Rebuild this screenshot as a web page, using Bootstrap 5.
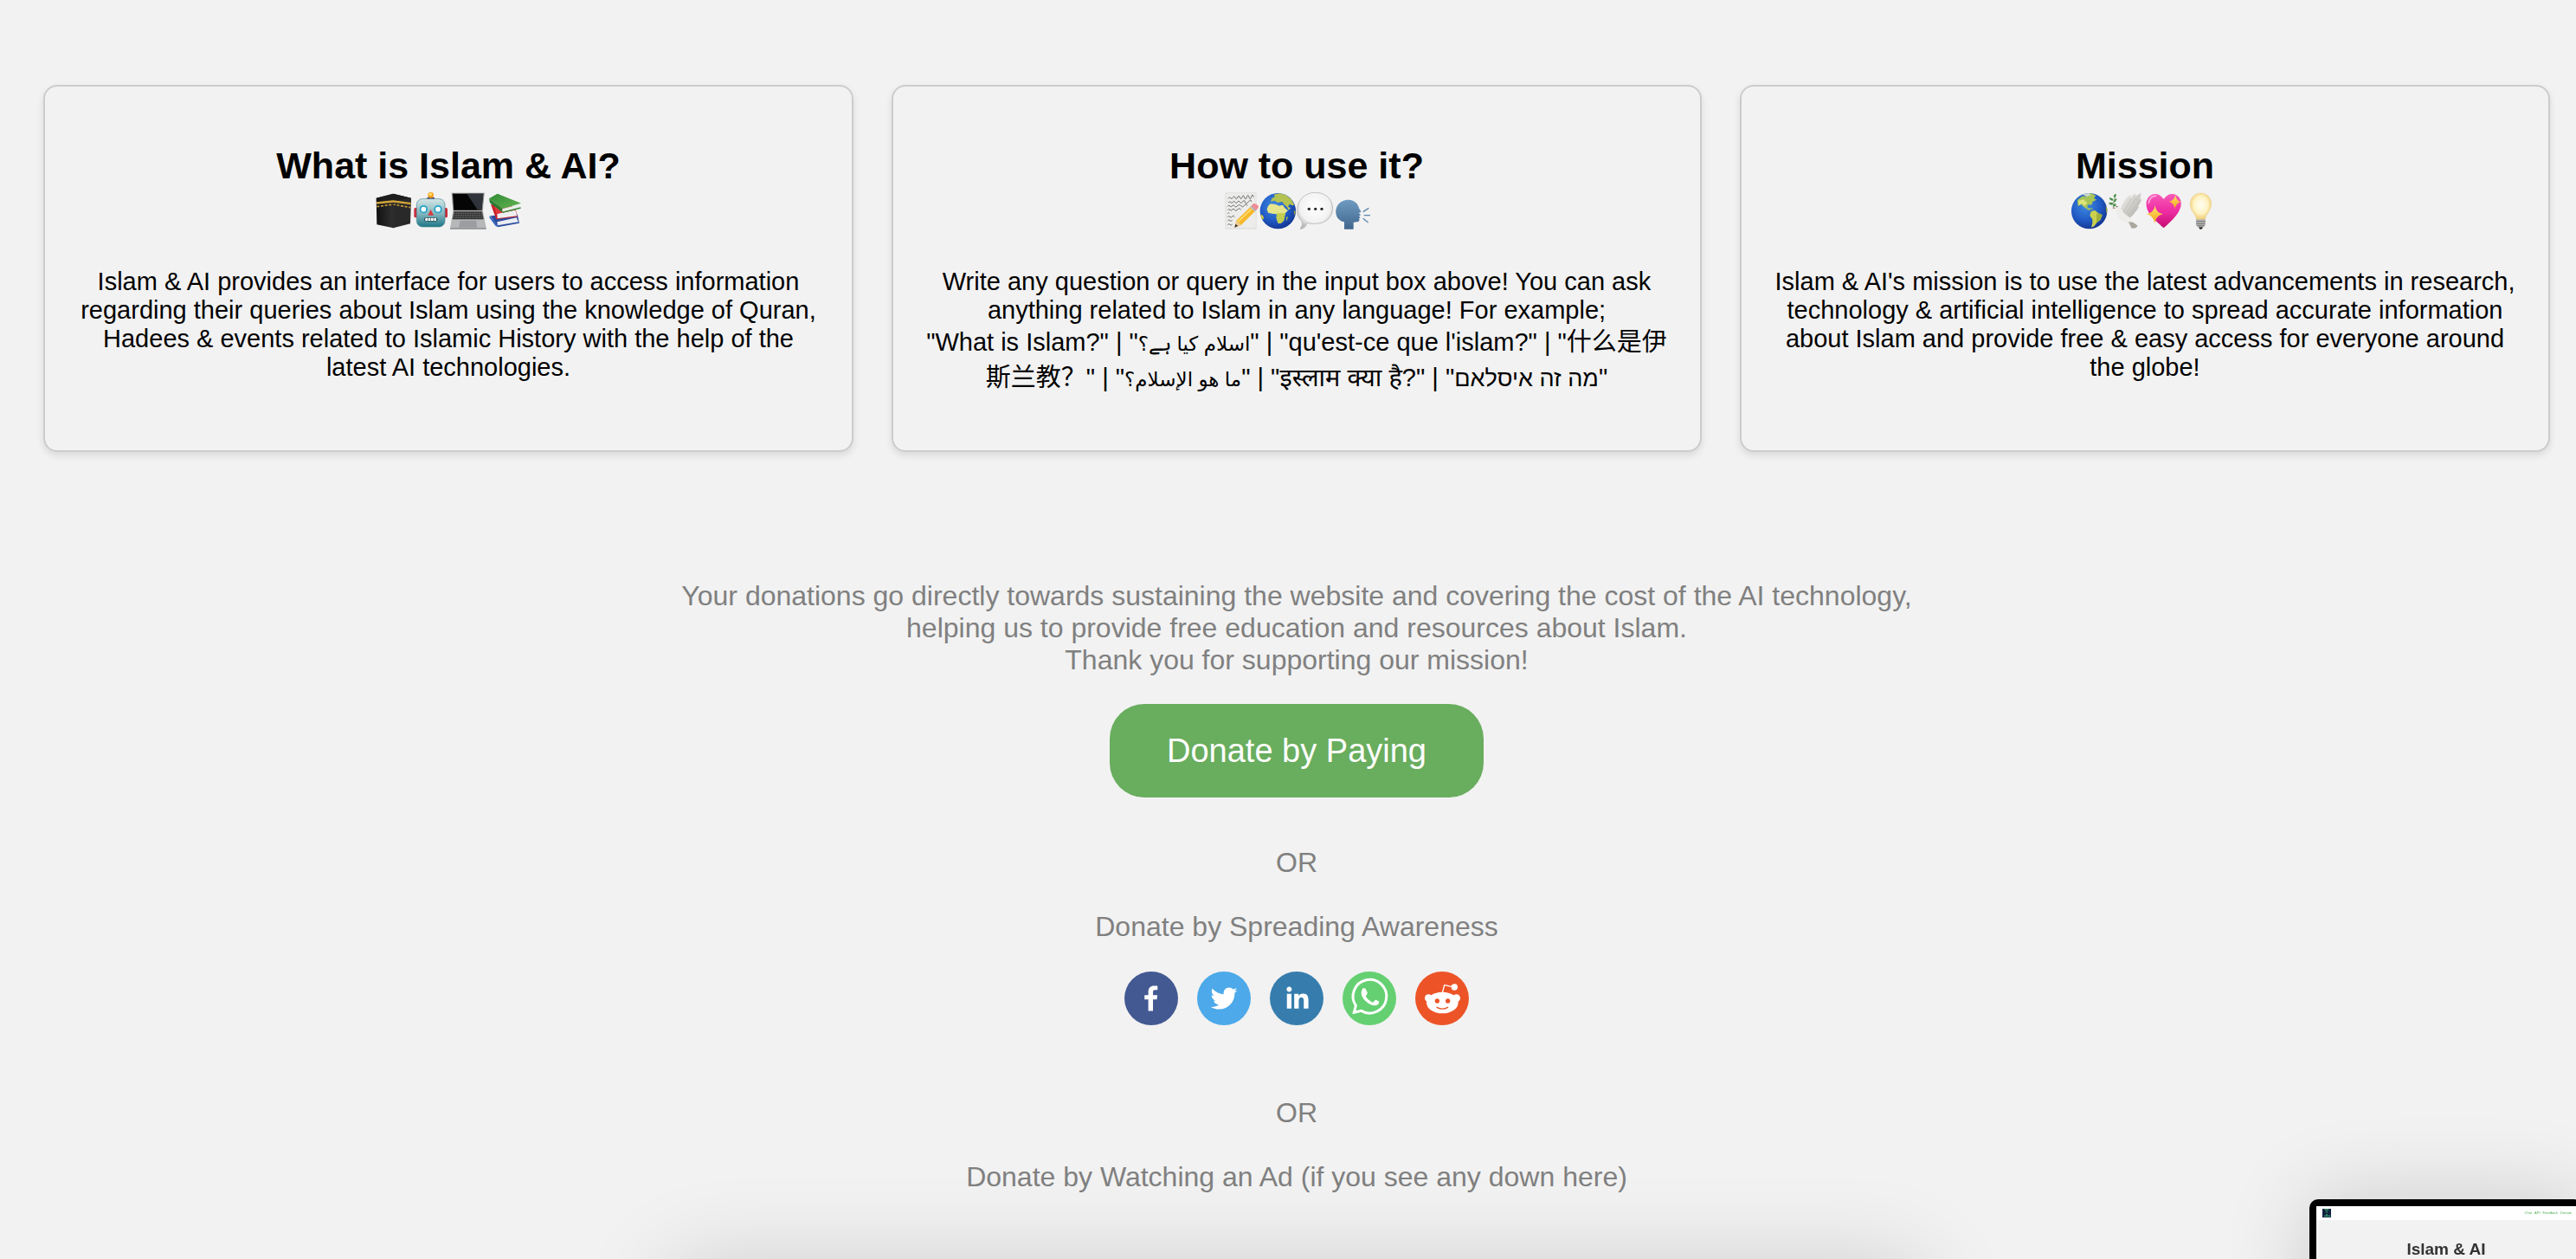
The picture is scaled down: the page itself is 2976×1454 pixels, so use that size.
<!DOCTYPE html>
<html lang="en">
<head>
<meta charset="utf-8">
<meta name="viewport" content="width=device-width, initial-scale=1">
<title>Islam &amp; AI</title>
<link href="https://cdn.jsdelivr.net/npm/bootstrap@5.3.0/dist/css/bootstrap.min.css" rel="stylesheet">
<style>
  body { background: #f2f2f2; color: #000; font-family: "Liberation Sans", Arial, "Noto Sans CJK SC", "DejaVu Sans", "Noto Sans", sans-serif; }
  .page-shell { height: 100vh; padding: 98px 30px 0 50px; }
  .info-grid { display: grid; grid-template-columns: repeat(3, 1fr); gap: 44px; }
  .info-card { background: transparent; border: 2px solid #ccc; border-radius: 16px; box-shadow: 0 4px 8px rgba(0,0,0,.1); padding: 66px 36px 63px; color: #000; }
  .info-card h2 { font-size: 43px; line-height: 50px; font-weight: 700; margin: 0 0 6px; }
  .emoji-strip { width: 172px; height: 43px; margin: 0 auto 44px; display: block; }
  .info-card p { font-size: 29px; line-height: 33px; margin: 0; }
  .info-card .samples { line-height: 41px; display: block; white-space: nowrap; }
  .samples bdi { font-size: 23px; line-height: 1; }
  .samples bdi:lang(he) { font-size: 27px; }
  .donate-area { margin-top: 148px; font-size: 32px; line-height: 37px; color: #808080; }
  .pay-btn { margin-top: 32px; width: 432px; height: 108px; border-radius: 40px; background: #69ad5e; color: #fff; font-size: 38px; border: 0; }
  .pay-btn:hover { background: #5b9c50; color: #fff; }
  .gap-after-btn { margin-top: 57px; }
  .gap-line { margin-top: 37px; }
  .social-row { margin-top: 33px; gap: 22px; }
  .social-row svg { width: 62px; height: 62px; display: block; }
  .gap-after-social { margin-top: 83px; }
  .ad-slot { width: 1444px; max-width: 100%; height: 400px; margin-top: 84px; background: #f2f2f2; box-shadow: 0 0 100px rgba(0,0,0,.16); }
  .preview-box { right: -8px; bottom: -131px; width: 316px; height: 200px; border: 8px solid #000; border-radius: 10px; background: #f2f2f2; box-shadow: 0 0 100px rgba(0,0,0,.16); }
  .preview-bar { height: 16px; background: #fff; padding: 0 5px 0 7px; }
  .preview-bar nav { gap: 3px; }
  .preview-bar a { font-size: 4px; line-height: 8px; color: #4caf50; text-decoration: none; }
  .preview-title { font-size: 19px; line-height: 22px; font-weight: 700; color: #333; margin-top: 23px; }
</style>
</head>
<body>
<svg width="0" height="0" class="position-absolute" aria-hidden="true">
  <defs>
    <radialGradient id="sea" cx=".4" cy=".35" r=".7"><stop offset="0" stop-color="#3f8be0"/><stop offset=".6" stop-color="#2059c4"/><stop offset="1" stop-color="#12338c"/></radialGradient>
    <linearGradient id="bot" x1="0" y1="0" x2="0" y2="1"><stop offset="0" stop-color="#d4e6e6"/><stop offset=".55" stop-color="#7fb4bd"/><stop offset="1" stop-color="#1d7686"/></linearGradient>
    <linearGradient id="blk" x1="0" y1="0" x2="1" y2="0"><stop offset="0" stop-color="#111"/><stop offset="1" stop-color="#303030"/></linearGradient>
    <linearGradient id="grn" x1="0" y1="0" x2="1" y2="1"><stop offset="0" stop-color="#2f8a35"/><stop offset="1" stop-color="#66b552"/></linearGradient>
    <radialGradient id="bub" cx=".5" cy=".4" r=".6"><stop offset="0" stop-color="#fff"/><stop offset=".7" stop-color="#f2f2f2"/><stop offset="1" stop-color="#b9b9b9"/></radialGradient>
    <linearGradient id="head" x1="0" y1="0" x2="0" y2="1"><stop offset="0" stop-color="#6f9cc2"/><stop offset="1" stop-color="#41658d"/></linearGradient>
    <linearGradient id="wing" x1="0" y1="0" x2="1" y2="1"><stop offset="0" stop-color="#f4f3f0"/><stop offset="1" stop-color="#aaa7a0"/></linearGradient>
    <linearGradient id="pink" x1="0" y1="0" x2="0" y2="1"><stop offset="0" stop-color="#f85ab8"/><stop offset=".5" stop-color="#ee2da3"/><stop offset="1" stop-color="#c60d72"/></linearGradient>
    <radialGradient id="glow" cx=".5" cy=".45" r=".55"><stop offset="0" stop-color="#fffef4"/><stop offset=".6" stop-color="#fff3c4"/><stop offset="1" stop-color="#f0cc72"/></radialGradient>
    <linearGradient id="gold" x1="0" y1="0" x2="0" y2="1"><stop offset="0" stop-color="#ffe46a"/><stop offset="1" stop-color="#f3a21c"/></linearGradient>
  </defs>
</svg>

<main class="page-shell overflow-hidden d-flex flex-column">
  <section class="info-grid text-center">
    <article class="card info-card">
      <h2>What is Islam &amp; AI?</h2>
      <svg class="emoji-strip" viewBox="36 36 516 129" role="img" aria-label="Kaaba, robot, laptop, books">
        <path d="M44 56 103 41 103 160 46 148Z" fill="url(#blk)"/><path d="M103 41 165 56 162 145 103 160Z" fill="#292929"/>
        <path d="M44 56 103 41 165 56 103 67Z" fill="#1d1d1d"/>
        <path d="M45 70 103 64 164 72V79L103 71 45 77Z" fill="#d3a53a"/>
        <path d="M46 86 103 78 163 89" fill="none" stroke="#c99b3a" stroke-width="5" stroke-dasharray="9 5"/>
        <path d="M103 72V160" stroke="#111" stroke-width="2"/>
        <rect x="175" y="90" width="18" height="34" rx="5" fill="#c72c3a"/><rect x="273" y="90" width="18" height="34" rx="5" fill="#c72c3a"/>
        <path d="M220 64V55Q233 48 246 55V64Z" fill="#55406b"/><circle cx="233" cy="46" r="10" fill="#f8a21b"/><circle cx="232" cy="43" r="5" fill="#ffe37a"/>
        <rect x="184" y="59" width="98" height="97" rx="20" fill="url(#bot)" stroke="#4d8b94" stroke-width="2"/>
        <circle cx="208" cy="95" r="14" fill="#27a4c8"/><circle cx="208" cy="95" r="8.500" fill="#fff"/><circle cx="258" cy="95" r="14" fill="#27a4c8"/><circle cx="258" cy="95" r="8.500" fill="#fff"/>
        <path d="M233 96 243 116H223Z" fill="#d83a3f"/><rect x="210" y="123" width="46" height="14" rx="6" fill="#264e58"/><path d="M214 130H253" stroke="#fff" stroke-width="10" stroke-dasharray="8 2"/>
        <path d="M305 38H419L413 101H310Z" fill="#8f8f8f"/><path d="M309 41H415L409 98H313Z" fill="#050505"/><path d="M358 41H415L409 98H396Z" fill="#30343a"/>
        <path d="M310 101H414L425 160H300Z" fill="#b6b7b9"/><path d="M313 103H411L416 130H308Z" fill="#333"/>
        <path d="M312 109H413M311 116H414M310 123H415" stroke="#a8a8a8" stroke-width="1.500" stroke-dasharray="6 2"/><path d="M335 134H390L394 158H331Z" fill="#9c9da0"/><path d="M300 160H425V164H300Z" fill="#828387"/>
        <path d="M440 118 465 157 540 143 533 112Z" fill="#2c4d9d"/><path d="M463 139 530 124 537 139 465 151Z" fill="#e9edf2"/><path d="M438 117 464 151 463 156 457 152 436 124Z" fill="#3e66bd"/>
        <path d="M441 78 460 130 533 121 525 85Z" fill="#c8202c"/><path d="M463 111 526 97 532 118 464 127Z" fill="#eeeef0"/><path d="M453 82 530 90 526 98 460 110Z" fill="#e1373b"/>
        <path d="M435 58 464 41 546 74 481 94Z" fill="url(#grn)"/><path d="M435 58 481 94V106L438 73Z" fill="#297a30"/><path d="M481 94 542 77 540 91 481 104Z" fill="#e9eee8"/><path d="M481 106 545 90" stroke="#2f8a35" stroke-width="4"/>
      </svg>
      <p>Islam &amp; AI provides an interface for users to access information regarding their queries about Islam using the knowledge of Quran, Hadees &amp; events related to Islamic History with the help of the latest AI technologies.</p>
    </article>
    <article class="card info-card">
      <h2>How to use it?</h2>
      <svg class="emoji-strip" viewBox="36 36 516 129" role="img" aria-label="Memo, globe, speech balloon, speaking head">
        <path d="M46 37H155V164H46Z" fill="#e1e1e0"/><path d="M50 40H152V158H50Z" fill="#ececeb"/>
        <path d="M57 58q4-8 8-2t8-2 8 1 8-1 8 0 8-1 8 1 8-1 8 0 8-1 8 1M57 72q4-6 8-1t8-1 8 1 8-1 8 0 10-1 8 1 12-1 10 0M55 85q4-6 8-1t8-1 8 1 10-1 12 0 12-1 10 1M55 98q4-6 8-1t8-1 8 1 10-1 12 0M55 110q3-5 6-1M55 122q4-6 8-1t8-1 8 1M55 135q4-6 8-1t8-1M55 149q4-6 8-1t8-1" fill="none" stroke="#555" stroke-width="2.500"/>
        <path d="M79 158 85 134 137 84 153 99 102 149Z" fill="#f7b82a"/><path d="M90 139 142 90" stroke="#ffdf70" stroke-width="5"/><path d="M79 158 85 134 102 149Z" fill="#edc994"/><path d="M79 158 82 146 91 153Z" fill="#333"/><path d="M132 88 140 80 156 95 148 103Z" fill="#b8b8ba"/><path d="M137 83 144 75Q153 73 161 83 164 91 153 98Z" fill="#ef8d95"/>
        <circle cx="229" cy="101" r="62" fill="url(#sea)"/>
        <path d="M195 84 203 76 221 78 233 83 246 80 253 91 264 99 255 108 251 121 249 134 240 143 230 144 224 127 225 112 209 110 195 107 191 95Z" fill="#e7e58b"/><path d="M225 109 255 108 250 134 239 144 229 142 224 126Z" fill="#c3cd4f"/>
        <path d="M204 69 208 58 219 51 215 44 235 40 256 45 275 60 286 80 279 82 270 77 262 89 250 78 244 69 228 72 217 65Z" fill="#b4c252"/><path d="M260 85 273 91 266 98Z" fill="#c5c955"/><path d="M169 112 178 118 180 130 173 128Z" fill="#d6cb3b"/><path d="M257 124 263 119 260 137Z" fill="#b6c34c"/><path d="M284 99 290 102 286 118Z" fill="#99a33b"/>
        <path d="M310 134C282 111 294 38 359 37 437 38 440 143 361 145 344 146 336 143 330 142 326 158 315 163 306 163 314 153 316 143 310 134Z" fill="url(#bub)" stroke="#aaa" stroke-width="2"/><g fill="#252525"><circle cx="337" cy="94" r="5"/><circle cx="359" cy="94" r="5"/><circle cx="381" cy="94" r="5"/></g>
        <path d="M459 164V139C428 134 424 100 436 82 450 57 489 56 503 76 509 84 509 93 517 102L515 106 509 107 516 114 510 119 515 124 510 127Q515 136 504 139L491 140V164Z" fill="url(#head)"/><path d="M524 104 544 91M527 116H549M524 127 542 141" stroke="#5c88ae" stroke-width="4"/>
      </svg>
      <p>Write any question or query in the input box above! You can ask anything related to Islam in any language! For example;
        <span class="samples">"What is Islam?" | "<bdi lang="ur">اسلام کیا ہے؟</bdi>" | "qu'est-ce que l'islam?" | "<span lang="zh-Hans">什么是伊<br>斯兰教？</span>" | "<bdi lang="ar">ما هو الإسلام؟</bdi>" | "<span lang="hi">इस्लाम क्या है?</span>" | "<bdi lang="he">מה זה איסלאם</bdi>"</span></p>
    </article>
    <article class="card info-card">
      <h2>Mission</h2>
      <svg class="emoji-strip" viewBox="36 36 516 129" role="img" aria-label="Globe, dove, sparkling heart, light bulb">
        <circle cx="101" cy="101" r="62" fill="url(#sea)"/>
        <path d="M60 63 78 49 91 53 83 44 107 40 124 47 117 56 126 62 113 69 109 80 97 79 94 88 107 97 99 98 81 86 73 78 62 84Z" fill="#a9c557"/><path d="M64 66 81 61 94 74 83 83 77 75 65 80Z" fill="#dfe37c"/><path d="M76 42 101 39 107 46 92 52Z" fill="#c7d7c9"/><path d="M107 103 120 98 132 108 146 115 140 131 127 142 118 154 108 158 112 143 112 130 103 118Z" fill="#cbd14e"/><path d="M127 108 146 115 137 132 126 140Z" fill="#9fae3b"/><path d="M101 92 113 94" stroke="#b4c755" stroke-width="3"/><path d="M158 84 164 94 161 112Z" fill="#9fae3b"/>
        <path d="M210 96C219 66 228 53 245 44L243 56 260 40 262 49 281 38 277 62 284 60 269 88 274 87 253 115 237 128 214 117Z" fill="url(#wing)"/><path d="M217 111 246 59M226 113 264 56M232 119 276 68" stroke="#bdbab4" stroke-width="2"/>
        <path d="M187 91C190 76 205 77 210 91L221 108 244 126 253 140 269 152 263 160 248 161 235 144 218 138 203 125C195 115 199 102 192 94Z" fill="#eeedea"/><path d="M237 139 253 140 269 152 263 160 248 161Z" fill="#aaa79f"/><circle cx="197" cy="86" r="2" fill="#222"/><path d="M190 88 184 92 190 94Z" fill="#c07369"/>
        <path d="M184 93Q183 68 194 43" fill="none" stroke="#4b7543" stroke-width="2"/><g fill="#4d9148"><path d="M194 42Q183 44 186 54 194 54 194 42Z"/><path d="M184 59Q172 51 170 57 174 67 184 65Z"/><path d="M187 64Q196 53 196 61 194 70 186 71Z"/><path d="M183 73Q171 69 168 76 176 82 183 79Z"/><path d="M184 79Q195 72 194 82 190 87 184 85Z"/></g>
        <path d="M359 160C335 137 294 110 299 70 305 38 341 31 359 60 377 31 414 38 419 70 423 107 382 138 359 160Z" fill="url(#pink)"/><path d="M307 73Q311 49 332 49" fill="none" stroke="#ff9fd7" stroke-width="6" stroke-linecap="round"/>
        <path d="M329 82Q332 108 357 112 333 116 328 144 323 117 299 112 325 108 329 82Z" fill="url(#gold)"/><path d="M400 45Q402 65 418 70 402 74 398 93 394 74 378 68 396 65 400 45Z" fill="url(#gold)"/>
        <path d="M473 130C471 113 450 101 451 75 454 28 520 27 524 75 524 101 504 113 502 130Z" fill="url(#glow)" stroke="#e8c980" stroke-width="1.500"/><path d="M471 130H504V148Q501 157 493 158L488 164 482 158Q472 156 471 148Z" fill="#b5b4b0"/><path d="M472 137H503M472 145H502M475 152H500" stroke="#777" stroke-width="3"/><path d="M480 157H495L491 164H484Z" fill="#333"/>
      </svg>
      <p>Islam &amp; AI's mission is to use the latest advancements in research, technology &amp; artificial intelligence to spread accurate information about Islam and provide free &amp; easy access for everyone around the globe!</p>
    </article>
  </section>

  <section class="donate-area text-center d-flex flex-column align-items-center">
    <div>Your donations go directly towards sustaining the website and covering the cost of the AI technology,<br>helping us to provide free education and resources about Islam.<br>Thank you for supporting our mission!</div>
    <button type="button" class="btn pay-btn">Donate by Paying</button>
    <div class="gap-after-btn">OR</div>
    <div class="gap-line">Donate by Spreading Awareness</div>
    <div class="social-row d-flex">
      <a href="#" aria-label="Facebook"><svg viewBox="0 0 64 64"><circle cx="32" cy="32" r="32" fill="#435992"/><path fill="#fff" d="M34.1,47V33.3h4.6l0.7-5.3h-5.3v-3.400c0-1.500,0.400-2.600,2.600-2.600l2.800,0v-4.800c-0.500-0.100-2.200-0.200-4.100-0.200c-4.100,0-6.900,2.500-6.900,7V28H24v5.300h4.500V47H34.100z"/></svg></a>
      <a href="#" aria-label="Twitter"><svg viewBox="0 0 64 64"><circle cx="32" cy="32" r="32" fill="#4da9e9"/><path fill="#fff" d="M48,22.1c-1.2,0.5-2.4,0.9-3.8,1c1.4-0.8,2.4-2.1,2.9-3.6c-1.3,0.8-2.7,1.3-4.2,1.6C41.7,19.8,40,19,38.2,19c-3.6,0-6.6,2.9-6.6,6.6c0,0.5,0.1,1,0.2,1.5c-5.5-0.3-10.3-2.9-13.5-6.9c-0.6,1-0.9,2.1-0.9,3.3c0,2.3,1.2,4.3,2.9,5.5c-1.1,0-2.1-0.3-3-0.8c0,0,0,0.1,0,0.1c0,3.2,2.3,5.8,5.3,6.4c-0.6,0.1-1.1,0.2-1.7,0.2c-0.4,0-0.8,0-1.2-0.1c0.8,2.6,3.3,4.5,6.1,4.6c-2.2,1.8-5.1,2.8-8.2,2.8c-0.5,0-1.1,0-1.6-0.1c2.9,1.9,6.4,2.9,10.1,2.9c12.1,0,18.7-10,18.7-18.7c0-0.3,0-0.6,0-0.8C46,24.5,47.1,23.4,48,22.1z"/></svg></a>
      <a href="#" aria-label="LinkedIn"><svg viewBox="0 0 64 64"><circle cx="32" cy="32" r="32" fill="#367dae"/><path fill="#fff" d="M20.4,44h5.4V26.6h-5.4V44z M23.1,18c-1.7,0-3.1,1.4-3.1,3.1c0,1.7,1.4,3.1,3.1,3.1c1.7,0,3.1-1.4,3.1-3.1C26.2,19.4,24.8,18,23.1,18z M39.5,26.2c-2.6,0-4.4,1.4-5.1,2.8h-0.1v-2.4h-5.2V44h5.4v-8.6c0-2.3,0.4-4.5,3.2-4.5c2.8,0,2.8,2.6,2.8,4.6V44H46v-9.5C46,29.8,45,26.2,39.5,26.2z"/></svg></a>
      <a href="#" aria-label="WhatsApp"><svg viewBox="0 0 186 186"><circle cx="93" cy="93" r="93" fill="#65d072"/><path fill="none" stroke="#fff" stroke-width="9" stroke-linejoin="miter" d="M40 142 46 118A58 58 0 1 1 65 136Z"/><path fill="#fff" d="M71 58C74 57 78 57 80 60L86 73C87 76 85 79 80 85 85 95 93 102 105 107 108 106 111 99 115 98 119 99 124 102 127 104 127 111 123 116 114 118 93 119 66 95 65 76 65 69 67 62 71 58Z"/></svg></a>
      <a href="#" aria-label="Reddit"><svg viewBox="0 0 186 186"><circle cx="93" cy="93" r="93" fill="#ec5428"/><g fill="#fff"><circle cx="46" cy="92" r="13"/><circle cx="143" cy="92" r="13"/><ellipse cx="94" cy="108" rx="55" ry="37"/><circle cx="136" cy="54" r="11"/></g><path d="M94 74 101 47 126 52" fill="none" stroke="#fff" stroke-width="4" stroke-linejoin="round"/><circle cx="76" cy="102" r="8" fill="#ec5428"/><circle cx="113" cy="102" r="8" fill="#ec5428"/><path d="M75 124Q94 135 113 124" fill="none" stroke="#ec5428" stroke-width="4" stroke-linecap="round"/></svg></a>
    </div>
    <div class="gap-after-social">OR</div>
    <div class="gap-line">Donate by Watching an Ad (if you see any down here)</div>
    <div class="ad-slot"></div>
  </section>
</main>

<aside class="preview-box position-fixed">
  <div class="preview-bar d-flex align-items-center justify-content-between">
    <svg width="10" height="10" viewBox="0 0 30 30"><path fill="#10223f" d="M0 0H30V30H0Z"/><path d="M8 3H22M15 8V15M6 25H28M15 18V25" stroke="#3fae6c" stroke-width="4" stroke-dasharray="5 1"/></svg>
    <nav class="d-flex"><a href="#">Chat</a><a href="#">API</a><a href="#">Feedback</a><a href="#">Donate</a></nav>
  </div>
  <div class="preview-title text-center">Islam &amp; AI</div>
</aside>
<script src="https://cdn.jsdelivr.net/npm/bootstrap@5.3.0/dist/js/bootstrap.bundle.min.js"></script>
</body>
</html>
